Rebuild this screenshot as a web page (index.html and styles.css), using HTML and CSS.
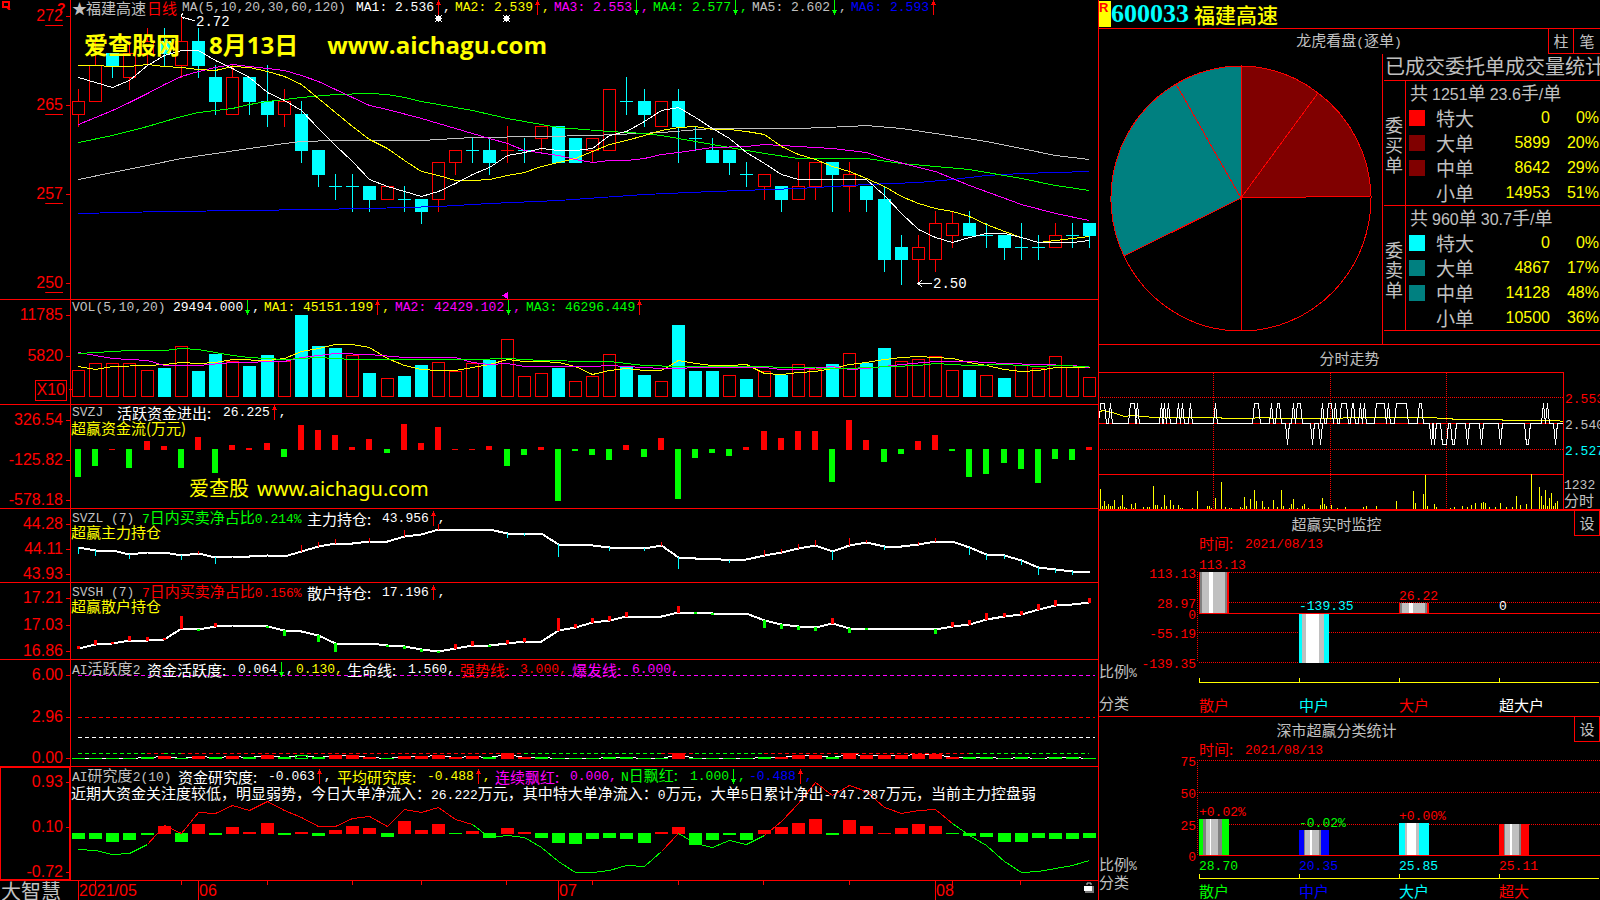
FILE: index.html
```html
<!DOCTYPE html>
<html lang="zh-CN">
<head>
<meta charset="utf-8">
<title>福建高速 600033</title>
<link rel="stylesheet" href="styles.css">
</head>
<body>
<svg class="defs" aria-hidden="true">
  <symbol id="up" viewBox="0 0 7 15"><path d="M3 0h1v15H3zM2 2h3v2H2zM1 4h5v1H1z"/></symbol>
  <symbol id="down" viewBox="0 0 7 15"><path d="M3 0h1v15H3zM2 11h3v2H2zM1 10h5v1H1z"/></symbol>
</svg>
<div class="app">
  <main class="charts">
    <section class="panel">
      <div class="axis axis-price"><span class="under">2<u>72</u></span><span class="under">2<u>65</u></span><span class="under">2<u>57</u></span><span class="under">2<u>50</u></span></div>
      <svg class="corner" viewBox="0 0 9 9"><path d="M1 1h6v5H1zM5 6l3 3" fill="none" stroke="#f00" stroke-width="2"/></svg>
      <b class="query">?</b>
      <div class="plot">
        <svg id="price" viewBox="71 0 1027 299" preserveAspectRatio="none"></svg>
        <div class="legend lg-price">
          <span class="gray">★</span><span class="gray">福建高速</span><span class="red">日线</span><span class="n gray">MA(5,10,20,30,60,120)</span>
          <span class="n white">MA1: 2.536<svg class="up"><use href="#up"/></svg>,</span>
          <span class="n yellow">MA2: 2.539<svg class="up"><use href="#up"/></svg>,</span>
          <span class="n magenta">MA3: 2.553<svg class="down"><use href="#down"/></svg>,</span>
          <span class="n green">MA4: 2.577<svg class="down"><use href="#down"/></svg>,</span>
          <span class="n gray">MA5: 2.602<svg class="down"><use href="#down"/></svg>,</span>
          <span class="n blue">MA6: 2.593<svg class="up"><use href="#up"/></svg></span>
        </div>
        <div class="note note-high">2.72</div>
        <div class="note note-low">2.50</div>
        <div class="mark mark-top"><span>爱查股网</span><span>8月13日</span><span>www.aichagu.com</span></div>
      </div>
    </section>

    <section class="panel">
      <div class="axis axis-vol"><span>11785</span><span>5820</span><span class="times">X10</span></div>
      <div class="plot">
        <svg id="volume" viewBox="71 0 1027 104" preserveAspectRatio="none"></svg>
        <div class="legend lg-vol">
          <span class="n gray">VOL(5,10,20)</span>
          <span class="n white">29494.000<svg class="down"><use href="#down"/></svg>,</span>
          <span class="n yellow">MA1: 45151.199<svg class="up"><use href="#up"/></svg>,</span>
          <span class="n magenta">MA2: 42429.102<svg class="down"><use href="#down"/></svg>,</span>
          <span class="n green">MA3: 46296.449<svg class="up"><use href="#up"/></svg></span>
        </div>
      </div>
    </section>

    <section class="panel">
      <div class="axis"><span>326.54</span><span>-125.82</span><span>-578.18</span></div>
      <div class="plot">
        <svg id="flow" viewBox="71 0 1027 103" preserveAspectRatio="none"></svg>
        <div class="legend lg-flow"><span class="n gray">SVZJ</span><span class="white">活跃资金进出:</span><span class="n white">26.225<svg class="up"><use href="#up"/></svg>,</span></div>
        <div class="subtitle yellow">超赢资金流(万元)</div>
        <div class="mark mark-flow"><span>爱查股</span><span>www.aichagu.com</span></div>
      </div>
    </section>

    <section class="panel">
      <div class="axis"><span>44.28</span><span>44.11</span><span>43.93</span></div>
      <div class="plot">
        <svg id="major" viewBox="71 0 1027 73" preserveAspectRatio="none"></svg>
        <div class="legend lg-hold"><span class="n gray">SVZL (7)</span><span class="green"><i>7</i>日内买卖净占比<i>0.214%</i></span><span class="white">主力持仓:</span><span class="n white">43.956<svg class="up"><use href="#up"/></svg>,</span></div>
        <div class="subtitle yellow">超赢主力持仓</div>
      </div>
    </section>

    <section class="panel">
      <div class="axis"><span>17.21</span><span>17.03</span><span>16.86</span></div>
      <div class="plot">
        <svg id="retail" viewBox="71 0 1027 76" preserveAspectRatio="none"></svg>
        <div class="legend lg-hold"><span class="n gray">SVSH (7)</span><span class="red"><i>7</i>日内买卖净占比<i>0.156%</i></span><span class="white">散户持仓:</span><span class="n white">17.196<svg class="up"><use href="#up"/></svg>,</span></div>
        <div class="subtitle yellow">超赢散户持仓</div>
      </div>
    </section>

    <section class="panel">
      <div class="axis"><span>6.00</span><span>2.96</span><span>0.00</span></div>
      <div class="plot">
        <svg id="active" viewBox="71 0 1027 106" preserveAspectRatio="none"></svg>
        <div class="legend lg-active">
          <span class="gray"><i>AI</i>活跃度<i>2</i></span><span class="white">资金活跃度:</span><span class="n white">0.064<svg class="down"><use href="#down"/></svg>,</span><span class="n yellow">0.130,</span>
          <span class="white">生命线:</span><span class="n white">1.560,</span><span class="red">强势线:</span><span class="n red">3.000,</span><span class="magenta">爆发线:</span><span class="n magenta">6.000,</span>
        </div>
      </div>
    </section>

    <section class="panel">
      <div class="axis axis-selected"><span>0.93</span><span>0.10</span><span>-0.72</span></div>
      <div class="plot">
        <svg id="research" viewBox="71 0 1027 113" preserveAspectRatio="none"></svg>
        <div class="legend lg-research">
          <span class="gray"><i>AI</i>研究度<i>2(10)</i></span><span class="white">资金研究度:</span><span class="n white">-0.063<svg class="up"><use href="#up"/></svg>,</span>
          <span class="yellow">平均研究度:</span><span class="n yellow">-0.488<svg class="up"><use href="#up"/></svg>,</span>
          <span class="magenta">连续飘红:</span><span class="n magenta">0.000,</span>
          <span class="green"><i>N</i>日飘红:</span><span class="n green">1.000<svg class="down"><use href="#down"/></svg>,</span>
          <span class="n blue">-0.488<svg class="up"><use href="#up"/></svg>,</span>
        </div>
        <p class="comment">近期大资金关注度较低，明显弱势，今日大单净流入：<i>26.222</i>万元，其中特大单净流入：<i>0</i>万元，大单<i>5</i>日累计净出<i>-747.287</i>万元，当前主力控盘弱</p>
      </div>
    </section>

    <footer class="timeline">
      <span class="brand">大智慧</span>
      <div class="dates">
        <svg id="dates" viewBox="71 0 1027 19" preserveAspectRatio="none"></svg>
        <span class="d1">2021/05</span><span class="d2">06</span><span class="d3">07</span><span class="d4">08</span>
        <svg class="lock" viewBox="0 0 10 11"><path d="M3 3V1h4v2" fill="none" stroke="#ccc"/><path d="M1 4h9v7H1z" fill="#777"/><path d="M0 4h8v5H0z" fill="#fff"/></svg>
      </div>
    </footer>
  </main>

  <aside class="side">
    <header class="stock"><span class="flag">R</span><b class="code">600033</b><span class="name">福建高速</span></header>

    <section class="box">
      <div class="bar"><h2>龙虎看盘<i>(</i>逐单<i>)</i></h2><button>柱</button><button>笔</button></div>
      <div class="split">
        <svg class="pie" viewBox="1099 54 283 290">
          <g stroke="#f00" stroke-width="1">
            <path fill="maroon" d="M1241 198V66A130 132 0 0 1 1318 93Z"/>
            <path fill="maroon" d="M1241 198L1318 93A130 132 0 0 1 1371 196Z"/>
            <path fill="teal" d="M1241 198L1124 256A130 132 0 0 1 1176 84Z"/>
            <path fill="teal" d="M1241 198L1176 84A130 132 0 0 1 1241 66Z"/>
            <path fill="none" d="M1371 196A130 133 0 0 1 1241 331A130 133 0 0 1 1124 256M1241 198V331"/>
          </g>
        </svg>
        <div class="orders">
          <h3>已成交委托单成交量统计</h3>
          <div class="order">
            <div class="dir">委买单</div>
            <div class="detail">
              <p>共 <em>1251</em>单 <em>23.6</em>手<em>/</em>单</p>
              <table>
                <tr><td class="sw"><b class="s1"></b></td><th>特大</th><td>0</td><td>0%</td></tr>
                <tr><td class="sw"><b class="s2"></b></td><th>大单</th><td>5899</td><td>20%</td></tr>
                <tr><td class="sw"><b class="s2"></b></td><th>中单</th><td>8642</td><td>29%</td></tr>
                <tr><td class="sw"></td><th>小单</th><td>14953</td><td>51%</td></tr>
              </table>
            </div>
          </div>
          <div class="order">
            <div class="dir">委卖单</div>
            <div class="detail">
              <p>共 <em>960</em>单 <em>30.7</em>手<em>/</em>单</p>
              <table>
                <tr><td class="sw"><b class="s3"></b></td><th>特大</th><td>0</td><td>0%</td></tr>
                <tr><td class="sw"><b class="s4"></b></td><th>大单</th><td>4867</td><td>17%</td></tr>
                <tr><td class="sw"><b class="s4"></b></td><th>中单</th><td>14128</td><td>48%</td></tr>
                <tr><td class="sw"></td><th>小单</th><td>10500</td><td>36%</td></tr>
              </table>
            </div>
          </div>
        </div>
      </div>
    </section>

    <section class="box thick">
      <div class="bar"><h2>分时走势</h2></div>
      <svg id="intraday" class="fig" viewBox="1099 371 501 138">
        <text x="1565" y="403" fill="#f00">2.553</text>
        <text x="1565" y="429" fill="#c0c0c0">2.540</text>
        <text x="1565" y="455" fill="#0ff">2.527</text>
        <text x="1564" y="489" fill="#c0c0c0">1232</text>
        <text class="cjk" x="1564" y="506" fill="#c0c0c0">分时</text>
      </svg>
    </section>

    <section class="box">
      <div class="bar narrow"><h2>超赢实时监控</h2><button>设</button></div>
      <svg id="monitor" class="fig" viewBox="1099 537 501 179">
        <g fill="#f00"><text class="cjk" x="1199" y="549">时间:</text><text x="1245" y="548">2021/08/13</text></g>
        <g fill="#f00" text-anchor="end"><text x="1196" y="578">113.13</text><text x="1196" y="608">28.97</text><text x="1196" y="619">0</text><text x="1196" y="638">-55.19</text><text x="1196" y="668">-139.35</text></g>
        <g fill="#c0c0c0"><text class="cjk" x="1099" y="677">比例<tspan class="num">%</tspan></text><text class="cjk" x="1099" y="709">分类</text></g>
      </svg>
    </section>

    <section class="box last">
      <div class="bar narrow"><h2>深市超赢分类统计</h2><button>设</button></div>
      <svg id="stats" class="fig" viewBox="1099 743 501 157">
        <g fill="#f00"><text class="cjk" x="1199" y="755">时间:</text><text x="1245" y="754">2021/08/13</text></g>
        <g fill="#f00" text-anchor="end"><text x="1196" y="766">75</text><text x="1196" y="798">50</text><text x="1196" y="830">25</text><text x="1196" y="861">0</text></g>
        <g fill="#c0c0c0"><text class="cjk" x="1099" y="870">比例<tspan class="num">%</tspan></text><text class="cjk" x="1099" y="888">分类</text></g>
      </svg>
    </section>
  </aside>
</div>
<script src="charts.js"></script>
</body>
</html>
```

FILE: styles.css
```css
* { box-sizing: border-box; margin: 0; padding: 0; }
body { background: #000; color: #c0c0c0; font: 15px/16px "Noto Sans CJK SC", sans-serif; overflow: hidden; }
.defs { position: absolute; width: 0; height: 0; }
i, .n { font: 13px/16px "Liberation Mono", monospace; }
.red { color: #f00; } .green { color: #0f0; } .yellow { color: #ff0; } .white { color: #fff; }
.magenta { color: #f0f; } .blue { color: #00f; } .gray { color: #c0c0c0; }

.app { display: grid; grid-template-columns: minmax(0, 1098fr) minmax(0, 502fr); height: 100vh; }
.charts { display: grid; min-height: 0;
  grid-template-rows: minmax(0, 300fr) minmax(0, 105fr) minmax(0, 104fr) minmax(0, 74fr) minmax(0, 77fr) minmax(0, 107fr) minmax(0, 114fr) minmax(0, 19fr); }
.panel { position: relative; display: grid; grid-template-columns: 71px minmax(0, 1fr); border-bottom: 1px solid #f00; min-height: 0; }

.axis { display: flex; flex-direction: column; justify-content: space-between; align-items: flex-end; min-height: 0;
  padding: 7px 7px 0 0; border-right: 1px solid #f00; color: #f00; font: 16px/16px "Liberation Sans", sans-serif; }
.axis span { position: relative; }
.axis span::after { content: ""; position: absolute; right: -7px; top: 8px; width: 4px; height: 1px; background: #f00; }
.axis-price { padding: 8px 7px 8px 0; }
.axis-price u { text-underline-offset: 4px; text-decoration-thickness: 1px; }
.axis-vol { justify-content: flex-start; gap: 25px; }
.axis-vol .times { margin: -9px -4px 0 0; padding: 1px 1px 2px; border: 1px solid #f00; }
.axis-selected { box-shadow: inset 0 0 0 1px #f00; }
.corner { position: absolute; left: 2px; top: 1px; width: 9px; height: 9px; }
.query { position: absolute; left: 57px; top: 0; color: #f00; font: bold 14px/16px "Liberation Sans", sans-serif; }

.plot, .dates { position: relative; min-width: 0; min-height: 0; }
.plot > svg, .dates > svg:first-child { position: absolute; inset: 0; width: 100%; height: 100%; shape-rendering: crispEdges; }
.legend { position: absolute; left: 1px; top: 0; display: grid; align-items: center; height: 16px; white-space: nowrap; }
.legend svg { width: 7px; height: 15px; margin: 0 1px; vertical-align: top; }
.legend .up { fill: #f00; } .legend .down { fill: #0f0; }
.lg-price { grid-template-columns: 14px 61px 35px 174px repeat(6, 99px); }
.lg-vol { grid-template-columns: 101px 91px 131px 131px 131px; }
.lg-flow { grid-template-columns: 45px 106px 80px; }
.lg-hold { grid-template-columns: 70px 165px 75px 80px; }
.lg-active { grid-template-columns: 75px 91px 58px 51px 61px 52px 60px 52px 60px 60px; }
.lg-research { grid-template-columns: 106px 90px 69px 90px 68px 75px 51px 69px 59px 70px; }
.subtitle { position: absolute; left: 0; top: 15px; white-space: nowrap; }
.comment { position: absolute; left: 0; top: 18px; color: #fff; white-space: nowrap; }
.note { position: absolute; color: #fff; font: 14px/16px "Liberation Mono", monospace; }
.note-high { left: 125px; top: 14px; }
.note-low { left: 862px; top: 276px; }
.mark { position: absolute; display: flex; color: #ff0; white-space: nowrap; }
.mark-top { left: 13px; top: 29px; gap: 29px; font: bold 24px/32px "Open Sans", "Noto Sans CJK SC", sans-serif; }
.mark-flow { left: 118px; top: 70px; gap: 8px; font: 20px/28px "Noto Sans", "Noto Sans CJK SC", sans-serif; }

.timeline { display: grid; grid-template-columns: 71px minmax(0, 1fr); color: #f00; font: 16px/19px "Liberation Sans", sans-serif; }
.brand { padding-left: 1px; color: #c0c0c0; font: 20px/19px "Noto Sans CJK SC", sans-serif; white-space: nowrap; }
.dates span { position: absolute; top: 0; }
.d1 { left: 8px; } .d2 { left: 128px; } .d3 { left: 488px; } .d4 { left: 865px; }
.lock { position: absolute; right: 4px; top: 1px; width: 10px; height: 11px; }

.side { display: grid; min-width: 0; border-left: 1px solid #f00; overflow: hidden;
  grid-template-rows: minmax(0, 29fr) minmax(0, 316fr) minmax(0, 166fr) minmax(0, 206fr) minmax(0, 183fr); }
.stock { display: flex; align-items: center; border-bottom: 1px solid #f00; color: #0ff; }
.flag { align-self: stretch; width: 12px; margin: 1px 0; background: #ff0; color: #f00; font: bold 13px/14px "Liberation Sans", sans-serif; }
.code { font: bold 26px/28px "Liberation Serif", serif; }
.name { margin-left: 5px; color: #ff0; font: 500 21px/28px "Noto Sans CJK SC", sans-serif; }
.box { display: flex; flex-direction: column; min-height: 0; border-bottom: 1px solid #f00; }
.thick { border-bottom-width: 2px; }
.last { border-bottom: 0; }
.bar { position: relative; display: flex; flex: none; height: 26px; }
.bar h2 { flex: 1; align-self: center; padding-left: 0; text-align: center; font-weight: 400; font-size: 15px; }
.bar button { width: 26px; height: 25px; border: 1px solid #f00; border-top: 0; background: none; color: #c0c0c0; font: 15px/20px "Noto Sans CJK SC", sans-serif; }
.bar button + button { border-left: 0; border-right: 0; }
.bar:has(button + button) { height: 25px; }
.bar:has(button + button) h2 { padding-left: 51px; }
.fig { flex: 1; min-height: 0; width: 100%; shape-rendering: crispEdges; font: 13px "Liberation Mono", monospace; }
.fig .cjk { font: 15px "Noto Sans CJK SC", sans-serif; }
.fig .num { font: 13px "Liberation Mono", monospace; }

.split { display: grid; grid-template-columns: minmax(0, 283fr) minmax(0, 218fr); flex: 1; min-height: 0; }
.pie { width: 100%; height: 100%; shape-rendering: crispEdges; }
.orders { border-left: 1px solid #f00; overflow: hidden; }
.orders h3 { height: 26px; padding-left: 2px; font: 20px/24px "Noto Sans CJK SC", sans-serif; white-space: nowrap; }
.order { display: grid; grid-template-columns: 23px minmax(0, 1fr); height: 125px; margin-left: 1px; border-top: 1px solid #f00; }
.order:last-child { height: 126px; border-bottom: 1px solid #f00; }
.dir { display: grid; place-items: center; border-right: 1px solid #f00; font-size: 18px; line-height: 20px; width: 22px; padding: 2px 2px 0 1px; word-break: break-all; text-align: center; }
.detail p { height: 24px; padding-left: 3px; font-size: 18px; line-height: 23px; white-space: nowrap; }
.detail em { font: 16px "Liberation Sans", sans-serif; }
.order table { width: 100%; border-collapse: collapse; table-layout: fixed; }
.order td, .order th { height: 25px; }
.order th { width: 58px; font-weight: 400; font-size: 19px; line-height: 22px; text-align: left; padding-left: 10px; }
.order td { color: #ff0; font: 16px/20px "Liberation Sans", sans-serif; text-align: right; }
.order td:nth-child(3) { width: auto; }
.order td:last-child { width: 50px; padding-right: 1px; }
.order td.sw { width: 19px; text-align: left; }
.sw b { display: block; width: 16px; height: 16px; margin-left: 2px; }
.s1 { background: #f00; } .s2 { background: maroon; } .s3 { background: #0ff; } .s4 { background: teal; }
```

FILE: charts.js
```js
const NS = 'http://www.w3.org/2000/svg';
const RED = '#f00', GREEN = '#0f0', CYAN = '#0ff', WHITE = '#fff', YELLOW = '#ff0', MAGENTA = '#f0f', BLUE = '#00f', GRAY = '#c0c0c0', DARK = '#808080';
const el = id => document.getElementById(id);
const cx = i => Math.round(78 + i * 17.14);

function add(svg, tag, attrs, text) {
  const node = document.createElementNS(NS, tag);
  for (const k in attrs) node.setAttribute(k, attrs[k]);
  if (text) node.textContent = text;
  svg.appendChild(node);
}
const fill = (svg, x, y, w, h, color) => add(svg, 'rect', { x, y, width: w, height: h, fill: color });
const frame = (svg, x, y, w, h, color) => add(svg, 'rect', { x: x + 0.5, y: y + 0.5, width: w - 1, height: h - 1, fill: 'none', stroke: color });
function line(svg, pts, color, width = 1, dash) {
  const a = { points: pts.map(p => p.join()).join(' '), fill: 'none', stroke: color, 'stroke-width': width };
  if (dash) a['stroke-dasharray'] = dash;
  add(svg, 'polyline', a);
}
/* "index:y" pairs, joined by candle position */
const series = s => s.split(' ').map(p => p.split(':').map(Number));
const plot = (svg, s, color, w) => line(svg, series(s).map(([i, y]) => [cx(i) + 0.5, y + 0.5]), color, w);

/* Daily candles: high, body top, body bottom, low, in cents below 2.72 */
const candles = `r6,7,8,9 r2,4,7,7 c3,3,4,5 r2,3,5,6 r1,2,3,4 c1,2,3,4 r0,2,4,5 c1,2,4,5 c4,5,7,8 r4,5,8,8
c5,5,7,8 c4,7,8,9 r6,7,8,9 c7,8,11,12 c11,11,13,14 c13,14,14,15 c13,14,14,16 c14,14,15,16 r14,14,15,15 c14,15,15,16
c15,15,16,17 r12,12,15,16 r11,11,12,13 c10,11,11,12 c10,11,12,13 r9,11,11,12 c10,11,11,12 r9,9,10,11 c9,9,12,12 c10,10,12,12
r10,10,11,12 r6,6,11,11 c5,7,7,8 c6,7,8,9 r7,7,9,9 c6,7,9,12 c9,10,10,11 c10,11,12,12 c11,11,12,13 c12,13,13,14
r13,13,14,15 c14,14,15,16 r12,14,15,15 r12,12,14,15 c12,12,13,16 r12,13,14,16 c14,14,15,16 c14,15,20,21 c18,19,20,22 r18,19,20,22
r16,17,20,21 r16,17,18,19 c16,17,18,18 c17,18,18,19 c18,18,19,20 c17,19,19,20 c18,19,19,20 r17,18,19,19 c17,18,18,19 c17,17,18,19`
  .split(/\s+/).map(s => [s[0], ...s.slice(1).split(',').map(Number)]);

{
  const svg = el('price'), y = k => Math.round(16.3 + k * 12.15);
  candles.forEach(([t, hi, top, bot, lo], i) => {
    const x = cx(i), c = t === 'r' ? RED : CYAN;
    if (hi < top) fill(svg, x, y(hi), 1, y(top) - y(hi), c);
    if (lo > bot) fill(svg, x, y(bot), 1, y(lo) - y(bot) + 1, c);
    if (top === bot) fill(svg, x - 6, y(top), 13, 1, c);
    else (t === 'r' ? frame : fill)(svg, x - 6, y(top), 13, y(bot) - y(top) + 1, c);
  });
  plot(svg, '0:213 5:211 10:210 17:208 21:206 24:203 28:200 33:194 37:191 42:188 46:184 49:182 51:179 53:175 55:173 59:171', BLUE);
  plot(svg, '0:179 2:172 4:165 6:158 8:153 10:148 12:143 13:141 15:140 20:140 23:137 27:136 30:135 34:132 37:128 42:128 45:126 46:125 48:128 50:133 53:141 55:148 57:155 59:159', GRAY);
  plot(svg, '0:142 2:135 4:126 6:116 7:112 9:108 10:104 11:101 12:99 13:97 15:94 17:93 18:94 19:97 20:101 23:110 25:118 27:124 28:127 31:131 33:133 34:135 36:141 38:147 40:153 42:158 46:158 48:163 50:166 52:169 55:178 57:185 59:190', GREEN);
  plot(svg, '0:124 1:117 2:110 3:102 4:93 5:84 6:76 7:71 8:67 9:64 10:66 11:68 12:70 13:75 14:81 15:89 16:97 17:105 18:109 20:118 22:128 24:138 25:143 26:150 28:155 29:159 30:162 31:160 32:160 33:158 34:154 35:152 37:147 39:146 40:144 42:146 44:148 46:152 47:158 49:167 50:171 52:185 55:204 57:213 59:220', MAGENTA);
  plot(svg, '0:65 3:66 4:64 5:66 6:67 7:69 8:70 9:66 10:67 11:71 12:76 13:84 14:98 15:112 16:126 17:139 18:148 19:160 20:171 21:175 22:180 23:180 24:179 25:175 26:172 27:166 28:162 29:158 30:151 31:144 32:140 33:135 34:130 35:127 36:126 37:129 38:129 39:131 40:134 41:146 42:154 43:159 44:166 45:171 46:178 47:186 48:196 49:203 50:208 51:211 52:216 53:224 54:231 55:237 56:242 57:240 58:238 59:236', YELLOW);
  plot(svg, '0:77 2:87 3:80 4:65 5:55 6:50 7:50 8:60 9:68 10:77 11:92 12:100 13:110 14:128 15:145 16:161 17:179 18:186 19:191 20:196 21:191 22:183 23:174 24:167 25:155 26:152 27:148 28:150 29:150 30:148 31:135 32:131 33:121 34:110 35:107 36:117 37:128 38:138 39:152 40:163 41:174 42:179 46:179 47:195 48:213 49:229 50:237 51:242 52:237 53:233 54:233 55:237 56:242 58:242 59:240', WHITE);
  line(svg, [[183, 13], [181, 16], [184, 19]], WHITE);
  line(svg, [[182, 17], [195, 21]], WHITE);
  line(svg, [[922, 280], [918, 283.5], [922, 287]], WHITE);
  line(svg, [[918, 283.5], [932, 283.5]], WHITE);
  for (const x of [438, 506]) {
    fill(svg, x - 2, 16, 5, 5, WHITE);
    line(svg, [[x - 3, 15], [x + 4, 22]], WHITE);
    line(svg, [[x + 4, 15], [x - 3, 22]], WHITE);
    fill(svg, x, 15, 1, 7, WHITE);
    fill(svg, x - 3, 18, 7, 1, WHITE);
  }
  add(svg, 'path', { d: 'M502 295.5L508 292V299Z', fill: MAGENTA });
}

{
  const svg = el('volume');
  const v = [27,34,34,34,27,29,51,26,43,36,31,42,36,82,51,49,42,24,19,21,32,35,26,34,37,58,21,24,29,16,21,43,31,22,16,72,26,26,22,18,26,22,33,28,33,44,34,49,36,38,41,27,27,22,19,32,29,41,30,20];
  const blue = new Set([5,7,8,10,11,13,14,15,17,19,20,24,28,32,33,35,36,37,39,41,44,46,47,52,54]);
  v.forEach((h, i) => (blue.has(i) ? fill : frame)(svg, cx(i) - 6, 97 - h, 13, h, blue.has(i) ? CYAN : RED));
  plot(svg, '0:66 1:69 2:66 4:65 5:64 6:62 7:63 8:62 9:59 11:60 12:58 13:51 14:48 15:44 16:44 17:47 18:58 19:65 20:69 21:70 22:70 23:67 24:64 25:59 26:61 27:61 28:62 29:66 30:74 31:70 32:68 33:70 34:70 35:60 36:63 37:65 38:65 39:64 40:73 41:74 42:72 43:71 44:68 45:64 46:62 47:59 48:57 49:56 50:57 51:58 52:62 53:65 54:69 55:71 56:70 57:67 59:67', YELLOW);
  plot(svg, '0:52 2:58 4:60 5:65 7:65 9:62 12:61 13:57 14:55 15:53 17:54 19:57 22:57 23:62 24:64 25:63 26:66 30:66 31:65 32:66 34:68 37:67 40:67 41:69 42:69 44:66 45:69 46:68 48:64 50:61 52:61 54:63 56:64 58:65 59:67', MAGENTA);
  plot(svg, '0:53 3:50 5:50 6:48 7:49 8:52 9:55 10:57 12:59 14:57 16:59 23:59 25:58 27:60 30:61 31:61 33:65 35:66 40:66 41:67 45:68 46:67 49:65 50:63 52:65 54:64 56:66 57:65 59:66', GREEN);
}

{
  const svg = el('flow');
  [-28,-17,1,-19,9,4,-19,13,-24,5,2,7,-8,25,20,15,3,11,-4,26,7,23,1,1,4,-17,-6,3,-52,-2,-6,-11,5,-8,12,-50,-9,-4,-7,3,19,12,19,19,-33,30,10,-13,-5,9,15,-2,-28,-25,-14,-20,-34,-10,-11,3]
    .forEach((v, i) => fill(svg, cx(i) - 3, v > 0 ? 45 - v : 44, 6, Math.abs(v), v > 0 ? RED : GREEN));
}

/* Holding curve with a mark hanging from (or standing on) each changed day */
function holding(svg, path, marks, upColor, downColor, width) {
  const pts = series(path);
  const at = i => {
    const k = Math.max(1, pts.findIndex(p => p[0] >= i)), [a, b] = [pts[k - 1], pts[k]];
    return Math.round(a[1] + (b[1] - a[1]) * (i - a[0]) / (b[0] - a[0]));
  };
  plot(svg, path, WHITE, 2);
  series(marks).forEach(([i, v]) => fill(svg, cx(i) - (width >> 1), v > 0 ? at(i) - v : at(i), width, Math.abs(v) + 1, v > 0 ? upColor : downColor));
}
holding(el('major'),
  '0:38 1:41 2:41 3:45 4:43 5:43 6:46 7:44 8:48 9:47 10:47 11:46 12:47 13:42 14:37 15:34 16:34 17:32 18:32 19:27 20:25 21:20 24:20 25:24 27:24 28:35 29:35 30:36 31:38 32:38 33:39 34:36 35:48 36:49 37:49 38:51 39:50 40:46 41:43 42:39 43:36 44:42 45:36 46:33 47:37 48:37 49:35 50:32 51:32 52:38 53:45 54:46 55:51 56:58 57:60 58:62 59:62',
  '0:-6 1:-5 3:-4 6:-4 7:2 8:-6 13:6 14:4 15:4 17:3 19:6 21:5 25:-4 26:-2 28:-12 31:-3 33:-2 34:3 35:-11 38:-2 40:5 41:3 42:4 43:5 44:-8 45:7 46:2 47:-3 49:2 50:3 52:-7 53:-5 54:-3 55:-4 56:-7 57:-3 58:-3', RED, CYAN, 1);
holding(el('retail'),
  '0:65 1:61 2:60 3:57 4:57 5:56 6:45 7:46 8:43 9:42 10:42 11:43 12:47 13:48 14:52 15:60 17:60 18:62 19:63 20:66 21:68 22:65 23:62 24:62 25:60 26:58 27:58 28:47 29:44 30:39 31:37 32:33 34:33 35:29 36:29 37:30 39:30 40:37 41:41 42:43 43:44 44:40 45:45 49:45 50:46 51:43 52:41 53:36 54:33 55:31 56:26 57:22 58:21 59:19',
  '0:2 1:4 2:1 3:4 4:3 5:1 6:12 7:-1 8:3 11:-1 12:-5 14:-6 15:-8 18:-1 19:-2 20:-2 21:-1 22:4 23:4 24:-1 25:3 26:3 28:12 29:3 30:4 31:4 32:4 35:6 36:-1 37:-1 40:-7 41:-4 42:-3 43:-3 44:5 45:-4 46:-1 50:-4 51:4 52:4 53:6 54:3 55:3 56:5 57:5 59:4', RED, GREEN, 3);

{
  const svg = el('active');
  line(svg, [[78, 15.5], [1095, 15.5]], MAGENTA, 1, '4 3');
  line(svg, [[78, 57.5], [1095, 57.5]], RED, 1, '4 3');
  line(svg, [[78, 77.5], [1095, 77.5]], WHITE, 1, '4 3');
  [[0, 4, GREEN], [4, 5, RED], [5, 6, GREEN], [6, 26, RED], [26, 34, GREEN], [34, 36, RED], [36, 40, GREEN], [40, 52, RED], [52, 59, GREEN]]
    .forEach(([a, b, c]) => line(svg, [[cx(a), 93.5], [cx(b), 93.5]], c, 1, '4 3'));
  const bars = 'g1 g1 g1 g1 g2 r3 g1 r3 g2 r3 g2 r4 g2 h4 h2 r4 r4 r2 g1 r3 r3 r4 r2 r3 g2 r6 r2 g2 g1 g1 g1 g2 g2 g1 g1 r6 g1 g1 g1 g1 g2 r2 r4 r4 g2 r6 r4 r4 r4 r5 r5 r2 g2 g2 g1 g2 g1 g2 g2 g1'.split(' ');
  line(svg, bars.map((b, i) => [cx(i) + 0.5, 98.5 - Math.min(4, b[1] - 1)]), WHITE);
  bars.forEach((b, i) => (b[0] === 'h' ? frame : fill)(svg, cx(i) - 6, 99 - b[1], 13, +b[1], b[0] === 'r' ? RED : GREEN));
}

{
  const svg = el('research');
  [-6,-6,-9,-7,-2,8,-9,10,-2,7,2,11,-2,2,-3,4,8,6,-4,13,4,10,-1,3,-5,6,2,-5,-10,-11,-6,-5,-6,-10,2,7,-12,-7,-2,-7,4,7,11,15,-2,14,8,1,6,10,8,-1,-3,-4,-9,-9,-5,-6,-6,-5]
    .forEach((v, i) => fill(svg, cx(i) - 6, v > 0 ? 67 - v : 66, 13, Math.abs(v), v > 0 ? RED : GREEN));
  plot(svg, '0:82 1:83 2:87 3:86 4:77', GREEN);
  plot(svg, '4:77 5:58 6:66 7:45 8:46 9:38 10:43 11:34 12:43 13:50 14:59 15:59 16:51 17:49 18:59 19:42 20:45 21:40 22:52 23:57', RED);
  plot(svg, '23:57 24:70 25:68 26:70 27:80 28:94 29:105 30:105 31:103 32:98 33:99 34:84', GREEN);
  plot(svg, '34:84 35:66', RED);
  plot(svg, '35:66 36:76 37:80 38:73 39:77 40:68', GREEN);
  plot(svg, '40:68 41:54 42:36 43:15 44:28 45:18 46:24 47:40 48:46 49:43 50:42 51:56', RED);
  plot(svg, '51:56 52:68 53:78 54:94 55:105 56:104 57:101 58:98 59:93', GREEN);
}

{
  const svg = el('dates');
  [78, 198, 558, 935].forEach(x => fill(svg, x, 0, 1, 19, RED));
  [95, 181, 267, 352, 421, 506, 592, 678, 763, 849, 952, 1020].forEach(x => fill(svg, x, 0, 1, 4, RED));
}

{
  const svg = el('intraday'), X = 1095;
  line(svg, [[1099, 372.5], [1563.5, 372.5], [1563.5, 509]], RED);
  line(svg, [[1099, 474.5], [1563, 474.5]], RED);
  line(svg, [[1099, 423.5], [1563, 423.5]], RED);
  for (const y of [397.5, 449.5]) line(svg, [[1100, y], [1563, y]], RED, 1, '1 1');
  for (const x of [1213.5, 1330.5, 1446.5]) line(svg, [[x, 373], [x, 509]], RED, 1, '1 1');
  line(svg, [[5,411],[8,410],[17,412],[30,416],[37,415],[60,417],[123,417],[130,418],[157,418],[163,417],[187,418],[243,418],[253,417],[327,417],[357,418],[358,419],[407,419],[408,420],[461,420],[468,421]].map(([x, y]) => [X + x, y + 0.5]), YELLOW);
  /* Price excursions from the middle line: start, end, direction */
  const runs = '5,9,u 15,15,u 35,39,u 42,42,u 66,66,u 69,69,u 73,73,u 83,83,u 87,87,u 95,95,u 120,120,u 159,163,u 176,176,u 182,184,u 192,192,d 198,198,u 202,205,u 217,217,d 225,225,d 227,227,u 233,236,u 240,240,u 246,251,u 257,258,u 265,265,u 269,269,u 281,289,u 293,293,u 301,311,u 324,326,u 336,336,d 339,339,d 347,351,d 357,359,d 372,372,d 386,386,d 405,405,d 431,433,d 448,448,u 452,452,u 460,460,d';
  const pts = [[X + 4.5, 418]];
  runs.split(' ').map(r => r.split(',')).forEach(([a, b, d], i) => {
    const y = d === 'u' ? 403.5 : 444.5;
    if (i) pts.push([X + +a - 1.5, 423.5]);
    pts.push([X + +a + 0.5, y], [X + +b + 0.5, y], [X + +b + 2.5, 423.5]);
  });
  pts.push([X + 468, 423.5]);
  line(svg, pts, WHITE);
  '5,20 7,3 9,8 11,3 13,5 15,3 17,3 19,9 23,2 25,3 27,14 29,2 31,1 36,5 38,1 40,6 48,2 52,2 54,2 58,23 60,4 62,4 66,2 69,14 71,3 75,9 78,4 83,4 85,1 87,1 97,1 102,18 112,3 114,3 116,1 120,11 126,27 130,2 134,1 136,1 145,2 147,1 149,12 151,3 155,10 159,19 161,8 167,8 169,2 173,2 178,9 182,2 186,19 188,3 194,1 196,5 198,10 202,1 207,3 209,5 213,1 225,4 227,11 229,5 231,3 236,4 242,1 250,2 268,2 271,3 281,3 301,8 318,18 320,6 328,15 330,34 332,3 339,5 341,2 355,1 359,2 367,3 372,2 376,4 380,6 386,6 388,7 390,6 394,2 400,2 405,6 411,2 417,2 421,13 425,4 431,5 436,35 444,22 446,13 448,4 450,19 452,3 454,11 456,16 458,3 460,6 462,8'
    .split(' ').forEach(p => { const [x, h] = p.split(',').map(Number); fill(svg, X + x, 509 - h, 1, h, YELLOW); });
}

/* Shaded column made of vertical stripes */
function column(svg, x, y, h, stripes) {
  for (const [color, w] of stripes) { fill(svg, x, y, w, h, color); x += w; }
}
function scale(svg, y, tick) {
  fill(svg, 1199, y, 400, 1, YELLOW);
  for (const x of [1199, 1299, 1399, 1499]) fill(svg, x, y - tick, 1, tick, YELLOW);
}
const label = (svg, x, y, color, text, cls) => add(svg, 'text', { x, y, fill: color, class: cls || '' }, text);

{
  const svg = el('monitor');
  for (const y of [572.5, 602.5, 632.5, 662.5]) line(svg, [[1199, y], [1600, y]], RED, 1, '1 1');
  line(svg, [[1197.5, 572], [1197.5, 662]], RED, 1, '1 1');
  const solid = [[RED, 1], [DARK, 2], [GRAY, 7], [WHITE, 4], [GRAY, 12], [DARK, 2], [RED, 2]];
  column(svg, 1199, 572, 41, solid);
  column(svg, 1299, 614, 49, [[CYAN, 3], [GRAY, 4], [WHITE, 13], [GRAY, 5], [CYAN, 5]]);
  column(svg, 1399, 603, 10, solid);
  fill(svg, 1199, 613, 401, 1, RED);
  label(svg, 1199, 569, RED, '113.13');
  label(svg, 1299, 610, CYAN, '-139.35');
  label(svg, 1399, 600, RED, '26.22');
  label(svg, 1499, 610, WHITE, '0');
  scale(svg, 682, 4);
  [['散户', RED], ['中户', CYAN], ['大户', RED], ['超大户', WHITE]].forEach(([t, c], i) => label(svg, 1199 + i * 100, 711, c, t, 'cjk'));
}

{
  const svg = el('stats');
  for (const y of [760.5, 792.5, 824.5]) line(svg, [[1199, y], [1600, y]], RED, 1, '1 1');
  line(svg, [[1197.5, 760], [1197.5, 855]], RED, 1, '1 1');
  column(svg, 1199, 819, 36, [[GREEN, 4], [DARK, 3], [GRAY, 4], [WHITE, 1], [GRAY, 7], [DARK, 4], [GREEN, 7]]);
  column(svg, 1299, 830, 25, [[BLUE, 5], [DARK, 1], [GRAY, 5], [WHITE, 2], [GRAY, 7], [DARK, 2], [BLUE, 8]]);
  column(svg, 1399, 823, 32, [[CYAN, 6], [GRAY, 2], [WHITE, 9], [GRAY, 3], [CYAN, 10]]);
  column(svg, 1499, 824, 31, [[RED, 5], [DARK, 1], [GRAY, 5], [WHITE, 2], [GRAY, 7], [DARK, 2], [RED, 8]]);
  fill(svg, 1199, 855, 401, 1, RED);
  label(svg, 1199, 816, RED, '+0.02%');
  label(svg, 1299, 827, GREEN, '-0.02%');
  label(svg, 1399, 820, RED, '+0.00%');
  [['28.70', '散户', GREEN], ['20.35', '中户', BLUE], ['25.85', '大户', CYAN], ['25.11', '超大', RED]].forEach(([v, t, c], i) => {
    label(svg, 1199 + i * 100, 870, c, v);
    label(svg, 1199 + i * 100, 897, c, t, 'cjk');
  });
  scale(svg, 878, 4);
}
```
